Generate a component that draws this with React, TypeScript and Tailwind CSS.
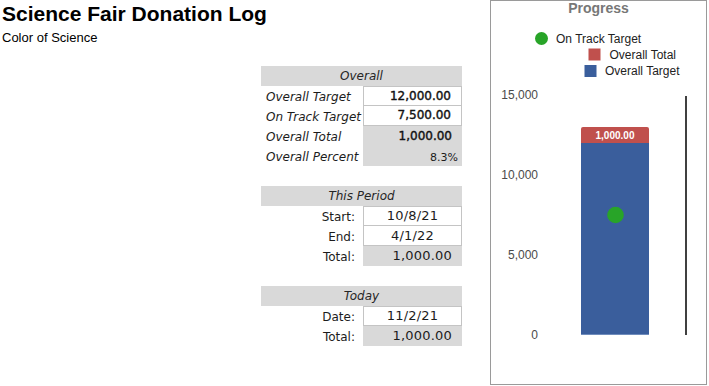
import React from "react";

const sheetFont = { fontFamily: '"DejaVu Sans", Verdana, sans-serif' };

type Row = {
    label: string;
    value: string;
    white?: boolean;
    first?: boolean;
    align: "right" | "center";
    strong?: boolean;
    small?: boolean;
};

function Block({ title, rows, italicLabels }: { title: string; rows: Row[]; italicLabels?: boolean }) {
    return (
        <div className="w-[201px] text-[12px] leading-[20px] text-[#1c1c1c]" style={sheetFont}>
            <div className="h-[20px] bg-[#d9d9d9] text-center italic text-[#262626]">{title}</div>
            {rows.map((r) => (
                <div key={r.label} className="flex h-[20px]">
                    <div
                        className={
                            italicLabels
                                ? "w-[102px] pl-[5px] pt-px italic whitespace-nowrap"
                                : "w-[102px] pr-[8px] pt-px text-right whitespace-nowrap"
                        }
                    >
                        {r.label}
                    </div>
                    <div
                        className={[
                            "w-[99px] h-[20px] whitespace-nowrap",
                            r.white ? "bg-white border border-[#c4c4c4] leading-[18px]" : "bg-[#d9d9d9]",
                            r.white && !r.first ? "border-t-0 leading-[19px]" : "",
                            r.align === "center" ? "text-center" : r.small ? "text-right pr-[4px]" : "text-right pr-[10px]",
                            r.strong
                                ? "text-[12px] text-[#111] [-webkit-text-stroke:0.4px_#111]"
                                : r.small
                                  ? "text-[11px] pt-[2px]"
                                  : "text-[13px] tracking-[0.2px]",
                        ].join(" ")}
                    >
                        {r.value}
                    </div>
                </div>
            ))}
        </div>
    );
}

function ProgressChart() {
    const zeroY = 334;
    const perUnit = 16 / 1000;
    const y = (v: number) => zeroY - v * perUnit;
    const ticks = [15000, 10000, 5000, 0];

    return (
        <div className="w-[217px] h-[385px] border border-[#9a9a9a] bg-white">
            <svg width="215" height="383" viewBox="0 0 215 383" style={{ fontFamily: '"Liberation Sans", Arial, sans-serif' }}>
                <text x="107.5" y="12" textAnchor="middle" fontSize="14" fontWeight="bold" fill="#777">
                    Progress
                </text>

                <circle cx="50.5" cy="37.5" r="6.5" fill="#28a428" />
                <text x="65" y="42" fontSize="12" fill="#222">On Track Target</text>
                <rect x="97.5" y="47.5" width="12" height="12" fill="#c0504d" />
                <text x="118.5" y="57.5" fontSize="12" fill="#222">Overall Total</text>
                <rect x="93.5" y="64" width="12" height="12" fill="#3a5e9c" />
                <text x="114" y="74" fontSize="12" fill="#222">Overall Target</text>

                {ticks.map((t) => (
                    <text key={t} x="47" y={y(t) + 4} textAnchor="end" fontSize="12" fill="#4a4a4a">
                        {t.toLocaleString("en-US")}
                    </text>
                ))}

                <rect x="90" y={y(12000)} width="68" height={12000 * perUnit} fill="#3a5e9c" />
                <rect x="90" y={zeroY - 1} width="68" height="1" fill="#6f8cbc" />
                <path
                    d={`M90 ${y(12000)} V${y(13000) + 2} Q90 ${y(13000)} 92 ${y(13000)} H156 Q158 ${y(13000)} 158 ${y(13000) + 2} V${y(12000)} Z`}
                    fill="#c0504d"
                />
                <text x="124" y={y(12500) + 3.5} textAnchor="middle" fontSize="10" fontWeight="bold" fill="#fff">
                    1,000.00
                </text>
                <circle cx="124.5" cy={y(7500)} r="8.3" fill="#28a428" />

                <line x1="195" y1="95" x2="195" y2={zeroY} stroke="#000" strokeWidth="1.5" />
            </svg>
        </div>
    );
}

export default function App() {
    return (
        <div className="w-[709px] h-[386px] bg-white flex overflow-hidden">
            <div className="w-[490px] flex flex-col">
                <div className="pl-[2px] pt-[2px]" style={{ fontFamily: '"Liberation Sans", Arial, sans-serif' }}>
                    <h1 className="text-[21px] leading-[24px] font-bold text-black">Science Fair Donation Log</h1>
                    <p className="mt-[4px] text-[13px] leading-[16px] text-black">Color of Science</p>
                </div>

                <div className="ml-[261px] mt-[20px] flex flex-col gap-[20px]">
                    <Block
                        title="Overall"
                        italicLabels
                        rows={[
                            { label: "Overall Target", value: "12,000.00", white: true, first: true, align: "right", strong: true },
                            { label: "On Track Target", value: "7,500.00", white: true, align: "right", strong: true },
                            { label: "Overall Total", value: "1,000.00", align: "right", strong: true },
                            { label: "Overall Percent", value: "8.3%", align: "right", small: true },
                        ]}
                    />
                    <Block
                        title="This Period"
                        rows={[
                            { label: "Start:", value: "10/8/21", white: true, first: true, align: "center" },
                            { label: "End:", value: "4/1/22", white: true, align: "center" },
                            { label: "Total:", value: "1,000.00", align: "right" },
                        ]}
                    />
                    <Block
                        title="Today"
                        rows={[
                            { label: "Date:", value: "11/2/21", white: true, first: true, align: "center" },
                            { label: "Total:", value: "1,000.00", align: "right" },
                        ]}
                    />
                </div>
            </div>
            <ProgressChart />
        </div>
    );
}
